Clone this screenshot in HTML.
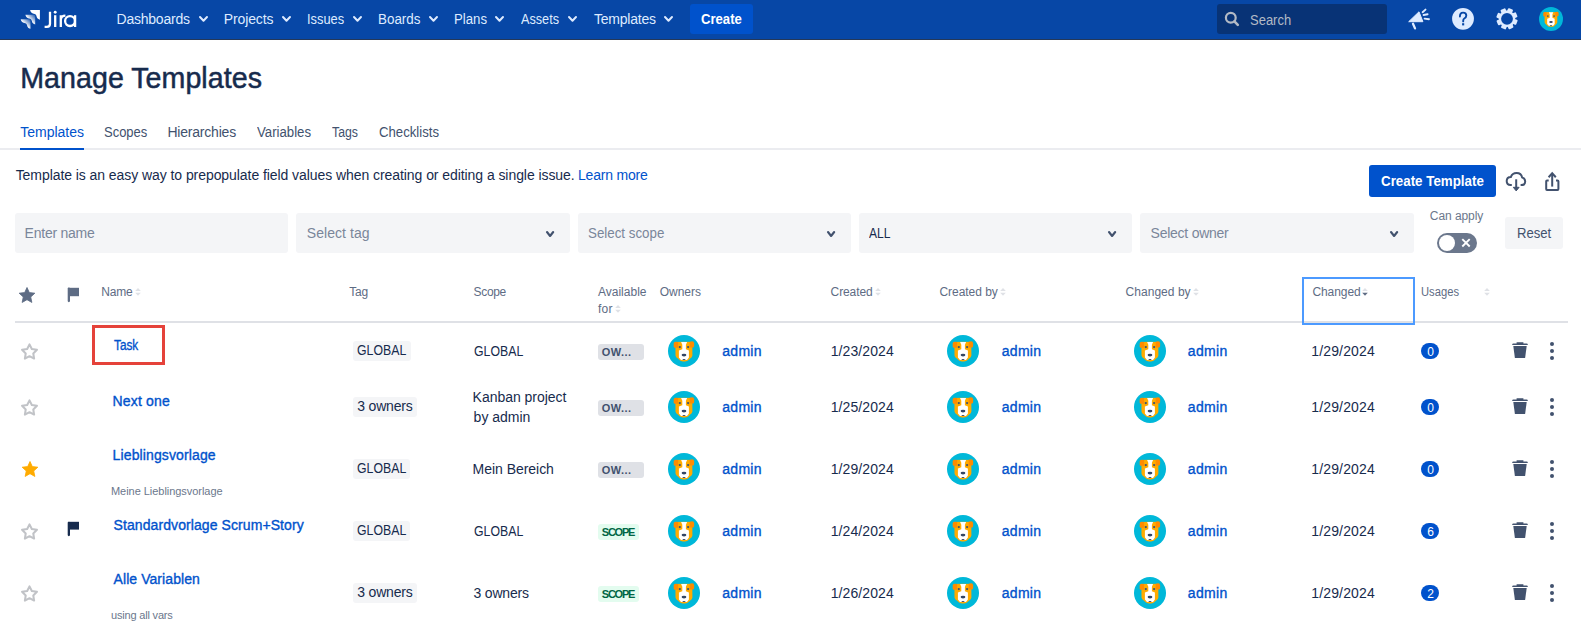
<!DOCTYPE html>
<html><head><meta charset="utf-8"><style>
html,body{margin:0;padding:0;background:#fff;width:1581px;height:636px;overflow:hidden;position:relative;font-family:"Liberation Sans", sans-serif;}
span{white-space:nowrap;}
</style></head><body>
<svg width="0" height="0" style="position:absolute"><defs><symbol id="dog" viewBox="-16 -16 32 32">
<circle cx="0" cy="0" r="16" fill="#00b8d9"/>
<path d="M-8.6,-8.9 Q0,-9.6 8.3,-8.9 L8.4,4.4 Q8.1,6.4 6.2,7.6 L4,9.6 Q3.2,10.4 1.2,10.4 L-1.2,10.4 Q-3.2,10.4 -4,9.6 L-6.2,7.6 Q-8.1,6.4 -8.5,4.4 Z" fill="#ffab00"/>
<path d="M-6,-3.3 L-9,-3.3 Q-10.3,-3.3 -10.3,-4.8 L-10.3,-7.4 Q-10.3,-9.2 -8.4,-9.2 L-5.8,-9 Z" fill="#ff8b00"/>
<path d="M5.8,-3.6 L8.8,-3.6 Q10.1,-3.6 10.1,-5.1 L10.1,-7.8 Q10.1,-9.7 8.2,-9.7 L5.6,-9.2 Z" fill="#ff8b00"/>
<path d="M-2.9,-8.9 L3.1,-8.9 L1.9,-6.3 L1.9,-1.8 L4.9,-0.4 L4.9,6.6 L3,8.9 L-3,8.9 L-5.1,6.6 L-5.1,-0.4 L-1.7,-1.8 L-1.7,-6.3 Z" fill="#fff"/>
<circle cx="-4.2" cy="-3.9" r="1.15" fill="#42526e"/><circle cx="4.1" cy="-3.9" r="1.15" fill="#42526e"/>
<ellipse cx="0" cy="4.1" rx="2.4" ry="1.3" fill="#344563"/>
<rect x="-1.3" y="8" width="2.6" height="0.9" fill="#344563"/>
</symbol>
<symbol id="staro" viewBox="0 0 24 24"><path d="M12.00,3.00 L14.94,8.85 L21.42,9.84 L16.76,14.45 L17.82,20.91 L12.00,17.90 L6.18,20.91 L7.24,14.45 L2.58,9.84 L9.06,8.85 Z" fill="none" stroke="#c1c3c7" stroke-width="2.6" stroke-linejoin="round"/></symbol>
<symbol id="starf" viewBox="0 0 24 24"><path d="M12.00,3.00 L14.76,9.10 L21.42,9.84 L16.47,14.35 L17.82,20.91 L12.00,17.60 L6.18,20.91 L7.53,14.35 L2.58,9.84 L9.24,9.10 Z" fill="currentColor" stroke="currentColor" stroke-width="1" stroke-linejoin="round"/></symbol>
</defs></svg>
<div style="position:absolute;left:0px;top:0px;width:1581px;height:39px;background:#0747a6;border-radius:0px;"></div>
<div style="position:absolute;left:0px;top:39px;width:1581px;height:1px;background:#253858;border-radius:0px;"></div>
<svg style="position:absolute;left:0px;top:0px;overflow:visible" width="100" height="39" viewBox="0 0 100 39">
<defs>
<linearGradient id="lg1" x1="0.95" y1="0.05" x2="0.45" y2="0.55"><stop offset="0" stop-color="#fff" stop-opacity="0.15"/><stop offset="1" stop-color="#fff"/></linearGradient>
</defs>
<path transform="translate(30.1,10.1)" d="M0,0 L9.8,0 L9.8,9.6 C8.6,9.3 6.8,8.4 6.4,6.2 C6.2,4.6 5.2,3.9 3.6,3.7 C1.6,3.4 0.5,2.2 0,0 Z" fill="#fff"/><path transform="translate(25.4,14.8)" d="M0,0 L9.8,0 L9.8,9.6 C8.6,9.3 6.8,8.4 6.4,6.2 C6.2,4.6 5.2,3.9 3.6,3.7 C1.6,3.4 0.5,2.2 0,0 Z" fill="url(#lg1)"/><path transform="translate(20.7,19.2)" d="M0,0 L9.8,0 L9.8,9.6 C8.6,9.3 6.8,8.4 6.4,6.2 C6.2,4.6 5.2,3.9 3.6,3.7 C1.6,3.4 0.5,2.2 0,0 Z" fill="url(#lg1)"/></svg>
<svg style="position:absolute;left:0px;top:0px;overflow:visible" width="100" height="39" viewBox="0 0 100 39"><g fill="none" stroke="#fff" stroke-width="2.3" stroke-linecap="butt">
<path d="M50,11.8 V23.8 Q50,26.9 46.8,26.9 H44.6"/>
<path d="M55.2,15.2 V27"/>
<path d="M60.8,15.2 V27 M60.8,19.6 Q61.2,15.6 65.4,15.6"/>
<circle cx="70" cy="21.1" r="4.9"/>
<path d="M75.1,15.2 V27"/>
</g><circle cx="55.2" cy="12.3" r="1.45" fill="#fff"/></svg>
<svg style="position:absolute;left:198.7px;top:16.2px;overflow:visible" width="9" height="5.5" viewBox="0 0 9 5.5"><path d="M1,1 L4.5,4.7 L8,1" fill="none" stroke="#deebff" stroke-width="2" stroke-linecap="round" stroke-linejoin="round"/></svg>
<svg style="position:absolute;left:282px;top:16.2px;overflow:visible" width="9" height="5.5" viewBox="0 0 9 5.5"><path d="M1,1 L4.5,4.7 L8,1" fill="none" stroke="#deebff" stroke-width="2" stroke-linecap="round" stroke-linejoin="round"/></svg>
<svg style="position:absolute;left:353px;top:16.2px;overflow:visible" width="9" height="5.5" viewBox="0 0 9 5.5"><path d="M1,1 L4.5,4.7 L8,1" fill="none" stroke="#deebff" stroke-width="2" stroke-linecap="round" stroke-linejoin="round"/></svg>
<svg style="position:absolute;left:428.7px;top:16.2px;overflow:visible" width="9" height="5.5" viewBox="0 0 9 5.5"><path d="M1,1 L4.5,4.7 L8,1" fill="none" stroke="#deebff" stroke-width="2" stroke-linecap="round" stroke-linejoin="round"/></svg>
<svg style="position:absolute;left:495.3px;top:16.2px;overflow:visible" width="9" height="5.5" viewBox="0 0 9 5.5"><path d="M1,1 L4.5,4.7 L8,1" fill="none" stroke="#deebff" stroke-width="2" stroke-linecap="round" stroke-linejoin="round"/></svg>
<svg style="position:absolute;left:568px;top:16.2px;overflow:visible" width="9" height="5.5" viewBox="0 0 9 5.5"><path d="M1,1 L4.5,4.7 L8,1" fill="none" stroke="#deebff" stroke-width="2" stroke-linecap="round" stroke-linejoin="round"/></svg>
<svg style="position:absolute;left:664.4px;top:16.2px;overflow:visible" width="9" height="5.5" viewBox="0 0 9 5.5"><path d="M1,1 L4.5,4.7 L8,1" fill="none" stroke="#deebff" stroke-width="2" stroke-linecap="round" stroke-linejoin="round"/></svg>
<div style="position:absolute;left:690px;top:4px;width:63px;height:30px;background:#0052cc;border-radius:3px;"></div>
<div style="position:absolute;left:1217px;top:4px;width:170px;height:30px;background:#083376;border-radius:3px;"></div>
<svg style="position:absolute;left:1222px;top:10px;overflow:visible" width="20" height="20" viewBox="0 0 20 20"><circle cx="8.8" cy="7.8" r="4.9" fill="none" stroke="#b3bac5" stroke-width="2.2"/><path d="M12.4,11.4 L15.8,14.8" stroke="#b3bac5" stroke-width="2.6" stroke-linecap="round"/></svg>
<svg style="position:absolute;left:1400px;top:4px;overflow:visible" width="40" height="30" viewBox="0 0 40 30"><path d="M8.7,17.7 L19,7.8 L22.9,17.7 Z" fill="#deebff" stroke="#deebff" stroke-width="1" stroke-linejoin="round"/>
<path d="M13,19.8 L15,24.4" stroke="#deebff" stroke-width="2.3" stroke-linecap="round"/>
<path d="M22.6,8.2 L25.5,5.6 M23.6,11 L27.6,10.2 M24.6,14.6 L29,15.2" stroke="#deebff" stroke-width="1.9" stroke-linecap="round"/></svg>
<svg style="position:absolute;left:1440px;top:0px;overflow:visible" width="40" height="39" viewBox="0 0 40 39"><circle cx="23" cy="18.8" r="10.9" fill="#deebff"/>
<path d="M19.9,16.5 Q19.9,12.6 23.1,12.6 Q26.3,12.6 26.3,15.6 Q26.3,17.5 24.3,18.5 Q23.2,19.1 23.2,20.8 V21.4" fill="none" stroke="#0747a6" stroke-width="1.9" stroke-linecap="round"/>
<rect x="22.1" y="23.2" width="2.1" height="2.2" fill="#0747a6"/></svg>
<svg style="position:absolute;left:1496px;top:8px;overflow:visible" width="22" height="22" viewBox="0 0 22 22"><circle cx="11" cy="10.8" r="8.2" fill="#deebff"/><rect x="8.1" y="0.2" width="5.3" height="5" rx="1" transform="rotate(22.5 11 10.8)" fill="#deebff"/><rect x="8.1" y="0.2" width="5.3" height="5" rx="1" transform="rotate(67.5 11 10.8)" fill="#deebff"/><rect x="8.1" y="0.2" width="5.3" height="5" rx="1" transform="rotate(112.5 11 10.8)" fill="#deebff"/><rect x="8.1" y="0.2" width="5.3" height="5" rx="1" transform="rotate(157.5 11 10.8)" fill="#deebff"/><rect x="8.1" y="0.2" width="5.3" height="5" rx="1" transform="rotate(202.5 11 10.8)" fill="#deebff"/><rect x="8.1" y="0.2" width="5.3" height="5" rx="1" transform="rotate(247.5 11 10.8)" fill="#deebff"/><rect x="8.1" y="0.2" width="5.3" height="5" rx="1" transform="rotate(292.5 11 10.8)" fill="#deebff"/><rect x="8.1" y="0.2" width="5.3" height="5" rx="1" transform="rotate(337.5 11 10.8)" fill="#deebff"/><circle cx="11" cy="10.8" r="5.9" fill="#0747a6"/></svg>
<svg style="position:absolute;left:1539px;top:6.899999999999999px" width="24" height="24"><use href="#dog"/></svg>
<div style="position:absolute;left:0px;top:148px;width:1581px;height:2px;background:#ebecf0;border-radius:0px;"></div>
<div style="position:absolute;left:20px;top:148px;width:64px;height:2px;background:#0052cc;border-radius:0px;"></div>
<div style="position:absolute;left:1369px;top:165px;width:127px;height:32px;background:#0052cc;border-radius:3px;"></div>
<svg style="position:absolute;left:1501.8px;top:165.8px;overflow:visible" width="30" height="30" viewBox="0 0 30 30"><path d="M9.8,19.1 H8.6 Q4.7,19.1 4.7,15.1 Q4.7,11 8.9,10.9 Q10.3,7 14.6,7 Q19.3,7 20.1,11.4 Q23.2,12.4 23.2,15.6 Q23.2,19.1 19.3,19.1 H18.6" fill="none" stroke="#42526e" stroke-width="2" stroke-linecap="butt"/>
<path d="M14.2,13.3 V22.5" stroke="#42526e" stroke-width="2"/><path d="M11.3,21.3 L14.2,24.9 L17.1,21.3 Z" fill="#42526e" stroke="#42526e" stroke-width="1" stroke-linejoin="round"/></svg>
<svg style="position:absolute;left:1540px;top:166px;overflow:visible" width="30" height="30" viewBox="0 0 30 30"><path d="M8.7,14.4 H7 Q6.2,14.4 6.2,15.2 V23 Q6.2,23.9 7,23.9 H17.6 Q18.4,23.9 18.4,23 V15.2 Q18.4,14.4 17.6,14.4 H16" fill="none" stroke="#42526e" stroke-width="2"/>
<path d="M12.2,8.6 V20.6" stroke="#42526e" stroke-width="2"/><path d="M8.6,11.2 L12.2,7.3 L15.8,11.2" fill="none" stroke="#42526e" stroke-width="2" stroke-linejoin="miter"/></svg>
<div style="position:absolute;left:15px;top:213px;width:273px;height:40px;background:#f4f5f7;border-radius:3px;"></div>
<div style="position:absolute;left:296px;top:213px;width:273.5px;height:40px;background:#f4f5f7;border-radius:3px;"></div>
<div style="position:absolute;left:578px;top:213px;width:273px;height:40px;background:#f4f5f7;border-radius:3px;"></div>
<div style="position:absolute;left:859px;top:213px;width:273px;height:40px;background:#f4f5f7;border-radius:3px;"></div>
<div style="position:absolute;left:1140px;top:213px;width:274px;height:40px;background:#f4f5f7;border-radius:3px;"></div>
<svg style="position:absolute;left:545.9px;top:230.6px;overflow:visible" width="8.2" height="5.8" viewBox="0 0 8.2 5.8"><path d="M1,1 L4.1,5.0 L7.199999999999999,1" fill="none" stroke="#42526e" stroke-width="2.1" stroke-linecap="round" stroke-linejoin="round"/></svg>
<svg style="position:absolute;left:826.8px;top:230.6px;overflow:visible" width="8.2" height="5.8" viewBox="0 0 8.2 5.8"><path d="M1,1 L4.1,5.0 L7.199999999999999,1" fill="none" stroke="#42526e" stroke-width="2.1" stroke-linecap="round" stroke-linejoin="round"/></svg>
<svg style="position:absolute;left:1107.6px;top:230.6px;overflow:visible" width="8.2" height="5.8" viewBox="0 0 8.2 5.8"><path d="M1,1 L4.1,5.0 L7.199999999999999,1" fill="none" stroke="#42526e" stroke-width="2.1" stroke-linecap="round" stroke-linejoin="round"/></svg>
<svg style="position:absolute;left:1390px;top:230.6px;overflow:visible" width="8.2" height="5.8" viewBox="0 0 8.2 5.8"><path d="M1,1 L4.1,5.0 L7.199999999999999,1" fill="none" stroke="#42526e" stroke-width="2.1" stroke-linecap="round" stroke-linejoin="round"/></svg>
<div style="position:absolute;left:1437px;top:233px;width:40px;height:20px;background:#6b778c;border-radius:10px;"></div>
<div style="position:absolute;left:1439px;top:235px;width:16px;height:16px;border-radius:8px;background:#fff"></div>
<svg style="position:absolute;left:1460px;top:237px;overflow:visible" width="12" height="12" viewBox="0 0 12 12"><path d="M2.3,2.1 L9.7,9.5 M9.7,2.1 L2.3,9.5" stroke="#fff" stroke-width="1.9"/></svg>
<div style="position:absolute;left:1505px;top:217px;width:58px;height:32px;background:#f4f5f7;border-radius:3px;"></div>
<svg style="position:absolute;left:17px;top:285.2px;color:#5e6c84" width="20" height="20" viewBox="0 0 24 24"><use href="#starf"/></svg>
<svg style="position:absolute;left:66px;top:285px;overflow:visible" width="16" height="19" viewBox="0 0 16 19"><path d="M2.4,2.8 H13 V11.2 H2.4 Z" fill="#5e6c84"/><path d="M2.85,3.6 V16" stroke="#5e6c84" stroke-width="2.3" stroke-linecap="round"/></svg>
<svg style="position:absolute;left:135.3px;top:288px;overflow:visible" width="6" height="8" viewBox="0 0 6 8"><path d="M0.2,3 L3,0 L5.8,3 Z" fill="#dfe1e6"/><path d="M0.2,4.8 L3,7.8 L5.8,4.8 Z" fill="#dfe1e6"/></svg>
<svg style="position:absolute;left:615.2px;top:305px;overflow:visible" width="6" height="8" viewBox="0 0 6 8"><path d="M0.2,3 L3,0 L5.8,3 Z" fill="#dfe1e6"/><path d="M0.2,4.8 L3,7.8 L5.8,4.8 Z" fill="#dfe1e6"/></svg>
<svg style="position:absolute;left:874.8px;top:288px;overflow:visible" width="6" height="8" viewBox="0 0 6 8"><path d="M0.2,3 L3,0 L5.8,3 Z" fill="#dfe1e6"/><path d="M0.2,4.8 L3,7.8 L5.8,4.8 Z" fill="#dfe1e6"/></svg>
<svg style="position:absolute;left:999.6px;top:288px;overflow:visible" width="6" height="8" viewBox="0 0 6 8"><path d="M0.2,3 L3,0 L5.8,3 Z" fill="#dfe1e6"/><path d="M0.2,4.8 L3,7.8 L5.8,4.8 Z" fill="#dfe1e6"/></svg>
<svg style="position:absolute;left:1193px;top:288px;overflow:visible" width="6" height="8" viewBox="0 0 6 8"><path d="M0.2,3 L3,0 L5.8,3 Z" fill="#dfe1e6"/><path d="M0.2,4.8 L3,7.8 L5.8,4.8 Z" fill="#dfe1e6"/></svg>
<svg style="position:absolute;left:1362px;top:288px;overflow:visible" width="6" height="8" viewBox="0 0 6 8"><path d="M0.2,3 L3,0 L5.8,3 Z" fill="#dfe1e6"/><path d="M0.2,4.8 L3,7.8 L5.8,4.8 Z" fill="#5e6c84"/></svg>
<svg style="position:absolute;left:1484px;top:288px;overflow:visible" width="6" height="8" viewBox="0 0 6 8"><path d="M0.2,3 L3,0 L5.8,3 Z" fill="#dfe1e6"/><path d="M0.2,4.8 L3,7.8 L5.8,4.8 Z" fill="#dfe1e6"/></svg>
<div style="position:absolute;left:15px;top:321px;width:1553px;height:2px;background:#dfe1e6;border-radius:0px;"></div>
<div style="position:absolute;left:1302px;top:277px;width:109px;height:44px;border:2px solid #4c9aff"></div>
<svg style="position:absolute;left:20px;top:341.7px" width="19" height="19" viewBox="0 0 24 24"><use href="#staro"/></svg>
<div style="position:absolute;left:353.3px;top:341.4px;width:57.39999999999998px;height:19.200000000000045px;background:#f4f5f7;border-radius:3px;"></div>
<div style="position:absolute;left:598px;top:344px;width:45.799999999999955px;height:15.600000000000023px;background:#dfe1e6;border-radius:3px;"></div>
<svg style="position:absolute;left:668px;top:335px" width="32" height="32"><use href="#dog"/></svg>
<svg style="position:absolute;left:947px;top:335px" width="32" height="32"><use href="#dog"/></svg>
<svg style="position:absolute;left:1134px;top:335px" width="32" height="32"><use href="#dog"/></svg>
<div style="position:absolute;left:1421px;top:343px;width:18px;height:16px;background:#0052cc;border-radius:8px;"></div>
<svg style="position:absolute;left:1510px;top:341px;overflow:visible" width="20" height="20" viewBox="0 0 20 20"><path d="M2.2,3.6 Q2.2,2.4 3.4,2.4 H6.6 V1.3 H13.4 V2.4 H16.6 Q17.8,2.4 17.8,3.6 V3.9 H2.2 Z" fill="#42526e"/><path d="M3.3,5.1 H16.7 L15.1,16.9 H4.9 Z" fill="#42526e"/></svg>
<svg style="position:absolute;left:1546px;top:341px;overflow:visible" width="12" height="20" viewBox="0 0 12 20"><circle cx="6" cy="3" r="2" fill="#42526e"/><circle cx="6" cy="10" r="2" fill="#42526e"/><circle cx="6" cy="17" r="2" fill="#42526e"/></svg>
<svg style="position:absolute;left:20px;top:397.7px" width="19" height="19" viewBox="0 0 24 24"><use href="#staro"/></svg>
<div style="position:absolute;left:353.3px;top:397.4px;width:63.599999999999966px;height:19.200000000000045px;background:#f4f5f7;border-radius:3px;"></div>
<div style="position:absolute;left:598px;top:400px;width:45.799999999999955px;height:15.600000000000023px;background:#dfe1e6;border-radius:3px;"></div>
<svg style="position:absolute;left:668px;top:391px" width="32" height="32"><use href="#dog"/></svg>
<svg style="position:absolute;left:947px;top:391px" width="32" height="32"><use href="#dog"/></svg>
<svg style="position:absolute;left:1134px;top:391px" width="32" height="32"><use href="#dog"/></svg>
<div style="position:absolute;left:1421px;top:399px;width:18px;height:16px;background:#0052cc;border-radius:8px;"></div>
<svg style="position:absolute;left:1510px;top:397px;overflow:visible" width="20" height="20" viewBox="0 0 20 20"><path d="M2.2,3.6 Q2.2,2.4 3.4,2.4 H6.6 V1.3 H13.4 V2.4 H16.6 Q17.8,2.4 17.8,3.6 V3.9 H2.2 Z" fill="#42526e"/><path d="M3.3,5.1 H16.7 L15.1,16.9 H4.9 Z" fill="#42526e"/></svg>
<svg style="position:absolute;left:1546px;top:397px;overflow:visible" width="12" height="20" viewBox="0 0 12 20"><circle cx="6" cy="3" r="2" fill="#42526e"/><circle cx="6" cy="10" r="2" fill="#42526e"/><circle cx="6" cy="17" r="2" fill="#42526e"/></svg>
<svg style="position:absolute;left:20.1px;top:458.9px;color:#ffab00" width="20" height="20" viewBox="0 0 24 24"><use href="#starf"/></svg>
<div style="position:absolute;left:353.3px;top:459.4px;width:57.0px;height:19.200000000000045px;background:#f4f5f7;border-radius:3px;"></div>
<div style="position:absolute;left:598px;top:462px;width:45.799999999999955px;height:15.600000000000023px;background:#dfe1e6;border-radius:3px;"></div>
<svg style="position:absolute;left:668px;top:453px" width="32" height="32"><use href="#dog"/></svg>
<svg style="position:absolute;left:947px;top:453px" width="32" height="32"><use href="#dog"/></svg>
<svg style="position:absolute;left:1134px;top:453px" width="32" height="32"><use href="#dog"/></svg>
<div style="position:absolute;left:1421px;top:461px;width:18px;height:16px;background:#0052cc;border-radius:8px;"></div>
<svg style="position:absolute;left:1510px;top:459px;overflow:visible" width="20" height="20" viewBox="0 0 20 20"><path d="M2.2,3.6 Q2.2,2.4 3.4,2.4 H6.6 V1.3 H13.4 V2.4 H16.6 Q17.8,2.4 17.8,3.6 V3.9 H2.2 Z" fill="#42526e"/><path d="M3.3,5.1 H16.7 L15.1,16.9 H4.9 Z" fill="#42526e"/></svg>
<svg style="position:absolute;left:1546px;top:459px;overflow:visible" width="12" height="20" viewBox="0 0 12 20"><circle cx="6" cy="3" r="2" fill="#42526e"/><circle cx="6" cy="10" r="2" fill="#42526e"/><circle cx="6" cy="17" r="2" fill="#42526e"/></svg>
<svg style="position:absolute;left:20px;top:521.7px" width="19" height="19" viewBox="0 0 24 24"><use href="#staro"/></svg>
<svg style="position:absolute;left:66px;top:521px;overflow:visible" width="16" height="19" viewBox="0 0 16 19"><path d="M2.4,0.8 H13 V8.6 H2.4 Z" fill="#172b4d"/><path d="M2.85,1.8 V14" stroke="#172b4d" stroke-width="2.3" stroke-linecap="round"/></svg>
<div style="position:absolute;left:353.3px;top:521.4px;width:57.0px;height:19.200000000000045px;background:#f4f5f7;border-radius:3px;"></div>
<div style="position:absolute;left:598px;top:524.1px;width:41px;height:15.600000000000023px;background:#e3fcef;border-radius:3px;"></div>
<svg style="position:absolute;left:668px;top:515px" width="32" height="32"><use href="#dog"/></svg>
<svg style="position:absolute;left:947px;top:515px" width="32" height="32"><use href="#dog"/></svg>
<svg style="position:absolute;left:1134px;top:515px" width="32" height="32"><use href="#dog"/></svg>
<div style="position:absolute;left:1421px;top:523px;width:18px;height:16px;background:#0052cc;border-radius:8px;"></div>
<svg style="position:absolute;left:1510px;top:521px;overflow:visible" width="20" height="20" viewBox="0 0 20 20"><path d="M2.2,3.6 Q2.2,2.4 3.4,2.4 H6.6 V1.3 H13.4 V2.4 H16.6 Q17.8,2.4 17.8,3.6 V3.9 H2.2 Z" fill="#42526e"/><path d="M3.3,5.1 H16.7 L15.1,16.9 H4.9 Z" fill="#42526e"/></svg>
<svg style="position:absolute;left:1546px;top:521px;overflow:visible" width="12" height="20" viewBox="0 0 12 20"><circle cx="6" cy="3" r="2" fill="#42526e"/><circle cx="6" cy="10" r="2" fill="#42526e"/><circle cx="6" cy="17" r="2" fill="#42526e"/></svg>
<svg style="position:absolute;left:20px;top:583.7px" width="19" height="19" viewBox="0 0 24 24"><use href="#staro"/></svg>
<div style="position:absolute;left:353.3px;top:583.4px;width:63.5px;height:19.200000000000045px;background:#f4f5f7;border-radius:3px;"></div>
<div style="position:absolute;left:598px;top:586.1px;width:41px;height:15.600000000000023px;background:#e3fcef;border-radius:3px;"></div>
<svg style="position:absolute;left:668px;top:577px" width="32" height="32"><use href="#dog"/></svg>
<svg style="position:absolute;left:947px;top:577px" width="32" height="32"><use href="#dog"/></svg>
<svg style="position:absolute;left:1134px;top:577px" width="32" height="32"><use href="#dog"/></svg>
<div style="position:absolute;left:1421px;top:585px;width:18px;height:16px;background:#0052cc;border-radius:8px;"></div>
<svg style="position:absolute;left:1510px;top:583px;overflow:visible" width="20" height="20" viewBox="0 0 20 20"><path d="M2.2,3.6 Q2.2,2.4 3.4,2.4 H6.6 V1.3 H13.4 V2.4 H16.6 Q17.8,2.4 17.8,3.6 V3.9 H2.2 Z" fill="#42526e"/><path d="M3.3,5.1 H16.7 L15.1,16.9 H4.9 Z" fill="#42526e"/></svg>
<svg style="position:absolute;left:1546px;top:583px;overflow:visible" width="12" height="20" viewBox="0 0 12 20"><circle cx="6" cy="3" r="2" fill="#42526e"/><circle cx="6" cy="10" r="2" fill="#42526e"/><circle cx="6" cy="17" r="2" fill="#42526e"/></svg>
<div style="position:absolute;left:92px;top:325px;width:67px;height:34px;border:3px solid #e5423a"></div>
<span style="position:absolute;left:116.50px;top:12.00px;font-size:14px;line-height:14px;font-weight:400;color:#deebff;letter-spacing:-0.221px;">Dashboards</span>
<span style="position:absolute;left:223.80px;top:12.00px;font-size:14px;line-height:14px;font-weight:400;color:#deebff;letter-spacing:-0.139px;">Projects</span>
<span style="position:absolute;left:306.68px;top:12.00px;font-size:14px;line-height:14px;font-weight:400;color:#deebff;letter-spacing:0.000px;transform:scaleX(0.9173);transform-origin:0 0;">Issues</span>
<span style="position:absolute;left:377.94px;top:12.00px;font-size:14px;line-height:14px;font-weight:400;color:#deebff;letter-spacing:0.000px;transform:scaleX(0.9571);transform-origin:0 0;">Boards</span>
<span style="position:absolute;left:453.76px;top:12.00px;font-size:14px;line-height:14px;font-weight:400;color:#deebff;letter-spacing:0.000px;transform:scaleX(0.9435);transform-origin:0 0;">Plans</span>
<span style="position:absolute;left:521.00px;top:12.00px;font-size:14px;line-height:14px;font-weight:400;color:#deebff;letter-spacing:0.000px;transform:scaleX(0.9045);transform-origin:0 0;">Assets</span>
<span style="position:absolute;left:594.00px;top:12.00px;font-size:14px;line-height:14px;font-weight:400;color:#deebff;letter-spacing:-0.226px;">Templates</span>
<span style="position:absolute;left:701.00px;top:12.00px;font-size:14px;line-height:14px;font-weight:700;color:#fff;letter-spacing:0.000px;transform:scaleX(0.9362);transform-origin:0 0;">Create</span>
<span style="position:absolute;left:1249.50px;top:13.00px;font-size:14px;line-height:14px;font-weight:400;color:#b3bac5;letter-spacing:0.000px;transform:scaleX(0.9272);transform-origin:0 0;">Search</span>
<span style="position:absolute;left:20.25px;top:63.90px;font-size:28.6px;line-height:28.6px;font-weight:400;color:#172b4d;letter-spacing:0.040px;-webkit-text-stroke:0.5px #172b4d;">Manage Templates</span>
<span style="position:absolute;left:20.30px;top:124.70px;font-size:14px;line-height:14px;font-weight:400;color:#0052cc;letter-spacing:-0.013px;">Templates</span>
<span style="position:absolute;left:104.30px;top:124.70px;font-size:14px;line-height:14px;font-weight:400;color:#42526e;letter-spacing:0.000px;transform:scaleX(0.9273);transform-origin:0 0;">Scopes</span>
<span style="position:absolute;left:167.40px;top:124.70px;font-size:14px;line-height:14px;font-weight:400;color:#42526e;letter-spacing:-0.200px;">Hierarchies</span>
<span style="position:absolute;left:257.00px;top:124.70px;font-size:14px;line-height:14px;font-weight:400;color:#42526e;letter-spacing:0.000px;transform:scaleX(0.9420);transform-origin:0 0;">Variables</span>
<span style="position:absolute;left:332.00px;top:124.70px;font-size:14px;line-height:14px;font-weight:400;color:#42526e;letter-spacing:0.000px;transform:scaleX(0.8792);transform-origin:0 0;">Tags</span>
<span style="position:absolute;left:379.00px;top:124.70px;font-size:14px;line-height:14px;font-weight:400;color:#42526e;letter-spacing:0.000px;transform:scaleX(0.9405);transform-origin:0 0;">Checklists</span>
<span style="position:absolute;left:15.70px;top:168.00px;font-size:14px;line-height:14px;font-weight:400;color:#172b4d;letter-spacing:-0.066px;">Template is an easy way to prepopulate field values when creating or editing a single issue.</span>
<span style="position:absolute;left:578.00px;top:168.00px;font-size:14px;line-height:14px;font-weight:400;color:#0052cc;letter-spacing:-0.201px;">Learn more</span>
<span style="position:absolute;left:1381.00px;top:173.60px;font-size:14px;line-height:14px;font-weight:700;color:#fff;letter-spacing:0.000px;transform:scaleX(0.9528);transform-origin:0 0;">Create Template</span>
<span style="position:absolute;left:24.60px;top:226.20px;font-size:14px;line-height:14px;font-weight:400;color:#7a869a;letter-spacing:-0.243px;">Enter name</span>
<span style="position:absolute;left:306.80px;top:226.20px;font-size:14px;line-height:14px;font-weight:400;color:#7a869a;letter-spacing:0.058px;">Select tag</span>
<span style="position:absolute;left:588.00px;top:226.20px;font-size:14px;line-height:14px;font-weight:400;color:#7a869a;letter-spacing:0.000px;transform:scaleX(0.9518);transform-origin:0 0;">Select scope</span>
<span style="position:absolute;left:869.40px;top:226.20px;font-size:14px;line-height:14px;font-weight:400;color:#172b4d;letter-spacing:0.000px;transform:scaleX(0.8597);transform-origin:0 0;">ALL</span>
<span style="position:absolute;left:1150.60px;top:226.20px;font-size:14px;line-height:14px;font-weight:400;color:#7a869a;letter-spacing:-0.252px;">Select owner</span>
<span style="position:absolute;left:1429.80px;top:210.00px;font-size:12px;line-height:12px;font-weight:400;color:#6b778c;letter-spacing:-0.067px;">Can apply</span>
<span style="position:absolute;left:1516.56px;top:226.20px;font-size:14px;line-height:14px;font-weight:400;color:#42526e;letter-spacing:0.000px;transform:scaleX(0.9360);transform-origin:0 0;">Reset</span>
<span style="position:absolute;left:101.30px;top:285.70px;font-size:12px;line-height:12px;font-weight:400;color:#5e6c84;letter-spacing:-0.212px;">Name</span>
<span style="position:absolute;left:349.30px;top:285.70px;font-size:12px;line-height:12px;font-weight:400;color:#5e6c84;letter-spacing:-0.187px;">Tag</span>
<span style="position:absolute;left:473.60px;top:285.70px;font-size:12px;line-height:12px;font-weight:400;color:#5e6c84;letter-spacing:-0.338px;">Scope</span>
<span style="position:absolute;left:598.00px;top:285.70px;font-size:12px;line-height:12px;font-weight:400;color:#5e6c84;letter-spacing:-0.001px;">Available</span>
<span style="position:absolute;left:598.00px;top:303.30px;font-size:12px;line-height:12px;font-weight:400;color:#5e6c84;letter-spacing:0.246px;">for</span>
<span style="position:absolute;left:659.70px;top:285.70px;font-size:12px;line-height:12px;font-weight:400;color:#5e6c84;letter-spacing:-0.029px;">Owners</span>
<span style="position:absolute;left:830.60px;top:285.70px;font-size:12px;line-height:12px;font-weight:400;color:#5e6c84;letter-spacing:-0.103px;">Created</span>
<span style="position:absolute;left:939.50px;top:285.70px;font-size:12px;line-height:12px;font-weight:400;color:#5e6c84;letter-spacing:-0.044px;">Created by</span>
<span style="position:absolute;left:1125.60px;top:285.70px;font-size:12px;line-height:12px;font-weight:400;color:#5e6c84;letter-spacing:0.031px;">Changed by</span>
<span style="position:absolute;left:1312.40px;top:285.70px;font-size:12px;line-height:12px;font-weight:400;color:#5e6c84;letter-spacing:-0.073px;">Changed</span>
<span style="position:absolute;left:1421.00px;top:285.70px;font-size:12px;line-height:12px;font-weight:400;color:#5e6c84;letter-spacing:0.000px;transform:scaleX(0.9339);transform-origin:0 0;">Usages</span>
<span style="position:absolute;left:113.55px;top:338.00px;font-size:14px;line-height:14px;font-weight:400;color:#0052cc;letter-spacing:0.000px;-webkit-text-stroke:0.35px #0052cc;transform:scaleX(0.8428);transform-origin:0 0;">Task</span>
<span style="position:absolute;left:357.30px;top:343.20px;font-size:14px;line-height:14px;font-weight:400;color:#172b4d;letter-spacing:0.000px;transform:scaleX(0.8784);transform-origin:0 0;">GLOBAL</span>
<span style="position:absolute;left:473.60px;top:343.60px;font-size:14px;line-height:14px;font-weight:400;color:#172b4d;letter-spacing:0.000px;transform:scaleX(0.8784);transform-origin:0 0;">GLOBAL</span>
<span style="position:absolute;left:601.80px;top:347.30px;font-size:11px;line-height:11px;font-weight:700;color:#42526e;letter-spacing:0.439px;">OW...</span>
<span style="position:absolute;left:722.17px;top:343.80px;font-size:14px;line-height:14px;font-weight:400;color:#0052cc;letter-spacing:0.326px;-webkit-text-stroke:0.35px #0052cc;">admin</span>
<span style="position:absolute;left:1001.67px;top:343.80px;font-size:14px;line-height:14px;font-weight:400;color:#0052cc;letter-spacing:0.326px;-webkit-text-stroke:0.35px #0052cc;">admin</span>
<span style="position:absolute;left:1187.77px;top:343.80px;font-size:14px;line-height:14px;font-weight:400;color:#0052cc;letter-spacing:0.326px;-webkit-text-stroke:0.35px #0052cc;">admin</span>
<span style="position:absolute;left:830.70px;top:343.80px;font-size:14px;line-height:14px;font-weight:400;color:#172b4d;letter-spacing:0.100px;">1/23/2024</span>
<span style="position:absolute;left:1311.20px;top:343.80px;font-size:14px;line-height:14px;font-weight:400;color:#172b4d;letter-spacing:0.163px;">1/29/2024</span>
<span style="position:absolute;left:1427.20px;top:345.70px;font-size:12px;line-height:12px;font-weight:400;color:#fff;letter-spacing:0.000px;">0</span>
<span style="position:absolute;left:112.58px;top:394.40px;font-size:14px;line-height:14px;font-weight:400;color:#0052cc;letter-spacing:0.157px;-webkit-text-stroke:0.35px #0052cc;">Next one</span>
<span style="position:absolute;left:357.30px;top:399.20px;font-size:14px;line-height:14px;font-weight:400;color:#172b4d;letter-spacing:-0.187px;">3 owners</span>
<span style="position:absolute;left:472.60px;top:390.40px;font-size:14px;line-height:14px;font-weight:400;color:#172b4d;letter-spacing:-0.022px;">Kanban project</span>
<span style="position:absolute;left:473.60px;top:410.40px;font-size:14px;line-height:14px;font-weight:400;color:#172b4d;letter-spacing:-0.003px;">by admin</span>
<span style="position:absolute;left:601.80px;top:403.30px;font-size:11px;line-height:11px;font-weight:700;color:#42526e;letter-spacing:0.439px;">OW...</span>
<span style="position:absolute;left:722.17px;top:399.80px;font-size:14px;line-height:14px;font-weight:400;color:#0052cc;letter-spacing:0.326px;-webkit-text-stroke:0.35px #0052cc;">admin</span>
<span style="position:absolute;left:1001.67px;top:399.80px;font-size:14px;line-height:14px;font-weight:400;color:#0052cc;letter-spacing:0.326px;-webkit-text-stroke:0.35px #0052cc;">admin</span>
<span style="position:absolute;left:1187.77px;top:399.80px;font-size:14px;line-height:14px;font-weight:400;color:#0052cc;letter-spacing:0.326px;-webkit-text-stroke:0.35px #0052cc;">admin</span>
<span style="position:absolute;left:830.70px;top:399.80px;font-size:14px;line-height:14px;font-weight:400;color:#172b4d;letter-spacing:0.100px;">1/25/2024</span>
<span style="position:absolute;left:1311.20px;top:399.80px;font-size:14px;line-height:14px;font-weight:400;color:#172b4d;letter-spacing:0.163px;">1/29/2024</span>
<span style="position:absolute;left:1427.20px;top:401.70px;font-size:12px;line-height:12px;font-weight:400;color:#fff;letter-spacing:0.000px;">0</span>
<span style="position:absolute;left:112.58px;top:447.80px;font-size:14px;line-height:14px;font-weight:400;color:#0052cc;letter-spacing:0.124px;-webkit-text-stroke:0.35px #0052cc;">Lieblingsvorlage</span>
<span style="position:absolute;left:111.00px;top:486.30px;font-size:11px;line-height:11px;font-weight:400;color:#6b778c;letter-spacing:-0.043px;">Meine Lieblingsvorlage</span>
<span style="position:absolute;left:357.30px;top:461.20px;font-size:14px;line-height:14px;font-weight:400;color:#172b4d;letter-spacing:0.000px;transform:scaleX(0.8784);transform-origin:0 0;">GLOBAL</span>
<span style="position:absolute;left:472.60px;top:461.60px;font-size:14px;line-height:14px;font-weight:400;color:#172b4d;letter-spacing:-0.038px;">Mein Bereich</span>
<span style="position:absolute;left:601.80px;top:465.30px;font-size:11px;line-height:11px;font-weight:700;color:#42526e;letter-spacing:0.439px;">OW...</span>
<span style="position:absolute;left:722.17px;top:461.80px;font-size:14px;line-height:14px;font-weight:400;color:#0052cc;letter-spacing:0.326px;-webkit-text-stroke:0.35px #0052cc;">admin</span>
<span style="position:absolute;left:1001.67px;top:461.80px;font-size:14px;line-height:14px;font-weight:400;color:#0052cc;letter-spacing:0.326px;-webkit-text-stroke:0.35px #0052cc;">admin</span>
<span style="position:absolute;left:1187.77px;top:461.80px;font-size:14px;line-height:14px;font-weight:400;color:#0052cc;letter-spacing:0.326px;-webkit-text-stroke:0.35px #0052cc;">admin</span>
<span style="position:absolute;left:830.70px;top:461.80px;font-size:14px;line-height:14px;font-weight:400;color:#172b4d;letter-spacing:0.100px;">1/29/2024</span>
<span style="position:absolute;left:1311.20px;top:461.80px;font-size:14px;line-height:14px;font-weight:400;color:#172b4d;letter-spacing:0.163px;">1/29/2024</span>
<span style="position:absolute;left:1427.20px;top:463.70px;font-size:12px;line-height:12px;font-weight:400;color:#fff;letter-spacing:0.000px;">0</span>
<span style="position:absolute;left:113.58px;top:518.00px;font-size:14px;line-height:14px;font-weight:400;color:#0052cc;letter-spacing:0.082px;-webkit-text-stroke:0.35px #0052cc;">Standardvorlage Scrum+Story</span>
<span style="position:absolute;left:357.30px;top:523.20px;font-size:14px;line-height:14px;font-weight:400;color:#172b4d;letter-spacing:0.000px;transform:scaleX(0.8784);transform-origin:0 0;">GLOBAL</span>
<span style="position:absolute;left:473.60px;top:523.60px;font-size:14px;line-height:14px;font-weight:400;color:#172b4d;letter-spacing:0.000px;transform:scaleX(0.8784);transform-origin:0 0;">GLOBAL</span>
<span style="position:absolute;left:601.80px;top:527.40px;font-size:11px;line-height:11px;font-weight:700;color:#006644;letter-spacing:-1.243px;">SCOPE</span>
<span style="position:absolute;left:722.17px;top:523.80px;font-size:14px;line-height:14px;font-weight:400;color:#0052cc;letter-spacing:0.326px;-webkit-text-stroke:0.35px #0052cc;">admin</span>
<span style="position:absolute;left:1001.67px;top:523.80px;font-size:14px;line-height:14px;font-weight:400;color:#0052cc;letter-spacing:0.326px;-webkit-text-stroke:0.35px #0052cc;">admin</span>
<span style="position:absolute;left:1187.77px;top:523.80px;font-size:14px;line-height:14px;font-weight:400;color:#0052cc;letter-spacing:0.326px;-webkit-text-stroke:0.35px #0052cc;">admin</span>
<span style="position:absolute;left:830.70px;top:523.80px;font-size:14px;line-height:14px;font-weight:400;color:#172b4d;letter-spacing:0.100px;">1/24/2024</span>
<span style="position:absolute;left:1311.20px;top:523.80px;font-size:14px;line-height:14px;font-weight:400;color:#172b4d;letter-spacing:0.163px;">1/29/2024</span>
<span style="position:absolute;left:1427.20px;top:525.70px;font-size:12px;line-height:12px;font-weight:400;color:#fff;letter-spacing:0.000px;">6</span>
<span style="position:absolute;left:113.58px;top:571.70px;font-size:14px;line-height:14px;font-weight:400;color:#0052cc;letter-spacing:0.068px;-webkit-text-stroke:0.35px #0052cc;">Alle Variablen</span>
<span style="position:absolute;left:111.00px;top:610.30px;font-size:11px;line-height:11px;font-weight:400;color:#6b778c;letter-spacing:-0.184px;">using all vars</span>
<span style="position:absolute;left:357.30px;top:585.20px;font-size:14px;line-height:14px;font-weight:400;color:#172b4d;letter-spacing:-0.187px;">3 owners</span>
<span style="position:absolute;left:473.60px;top:585.60px;font-size:14px;line-height:14px;font-weight:400;color:#172b4d;letter-spacing:-0.201px;">3 owners</span>
<span style="position:absolute;left:601.80px;top:589.40px;font-size:11px;line-height:11px;font-weight:700;color:#006644;letter-spacing:-1.243px;">SCOPE</span>
<span style="position:absolute;left:722.17px;top:585.80px;font-size:14px;line-height:14px;font-weight:400;color:#0052cc;letter-spacing:0.326px;-webkit-text-stroke:0.35px #0052cc;">admin</span>
<span style="position:absolute;left:1001.67px;top:585.80px;font-size:14px;line-height:14px;font-weight:400;color:#0052cc;letter-spacing:0.326px;-webkit-text-stroke:0.35px #0052cc;">admin</span>
<span style="position:absolute;left:1187.77px;top:585.80px;font-size:14px;line-height:14px;font-weight:400;color:#0052cc;letter-spacing:0.326px;-webkit-text-stroke:0.35px #0052cc;">admin</span>
<span style="position:absolute;left:830.70px;top:585.80px;font-size:14px;line-height:14px;font-weight:400;color:#172b4d;letter-spacing:0.100px;">1/26/2024</span>
<span style="position:absolute;left:1311.20px;top:585.80px;font-size:14px;line-height:14px;font-weight:400;color:#172b4d;letter-spacing:0.163px;">1/29/2024</span>
<span style="position:absolute;left:1427.20px;top:587.70px;font-size:12px;line-height:12px;font-weight:400;color:#fff;letter-spacing:0.000px;">2</span>
</body></html>
